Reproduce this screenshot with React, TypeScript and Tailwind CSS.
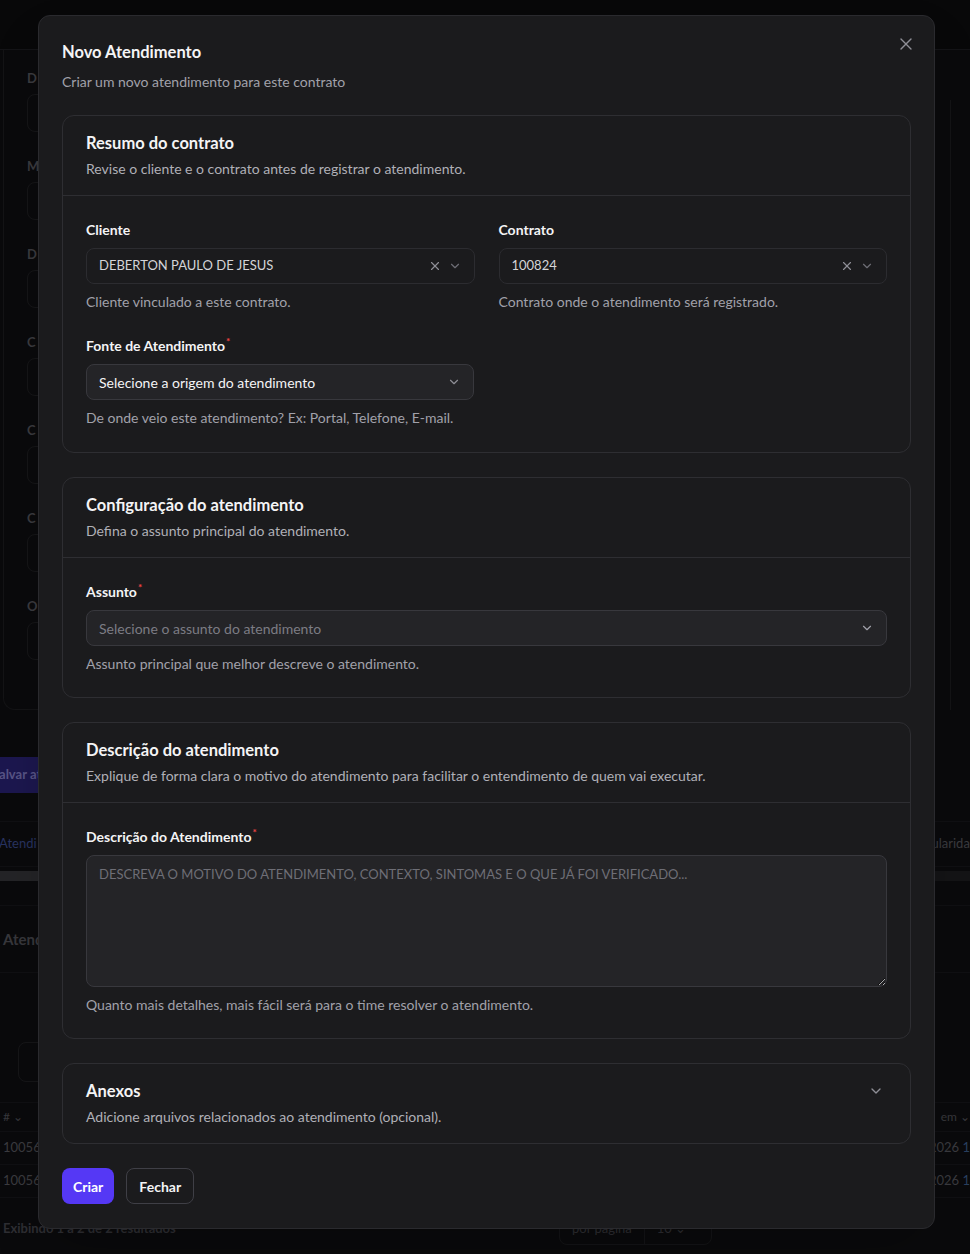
import React from "react";
import { X, ChevronDown } from "lucide-react";

const font = { fontFamily: "Lato, 'Noto Sans', sans-serif" };

function Req() {
  return <span className="ml-[1px] align-top text-[10px] leading-none text-[#ef4444]">*</span>;
}

function Label({ children, req }: { children: React.ReactNode; req?: boolean }) {
  return (
    <div className="h-5 text-[14px] font-bold leading-5 text-[#f4f4f5]">
      {children}
      {req && <Req />}
    </div>
  );
}

function Helper({ children }: { children: React.ReactNode }) {
  return <div className="mt-2 text-[14px] leading-5 text-[#a1a1aa]">{children}</div>;
}

function CardHeader({ title, sub, chevron }: { title: string; sub: string; chevron?: boolean }) {
  return (
    <div className="flex items-start justify-between px-[23px] pb-4 pt-[15px]">
      <div>
        <div className="text-[16.5px] font-bold leading-6 text-[#f4f4f5]">{title}</div>
        <div className="mt-1 text-[14px] leading-5 text-[#b0b0b7]">{sub}</div>
      </div>
      {chevron && <ChevronDown className="mr-[3px] mt-[4px] h-4 w-4 text-[#8e8e96]" strokeWidth={2} />}
    </div>
  );
}

function Background() {
  const labels = ["D", "M", "D", "C", "C", "C", "O"];
  return (
    <div className="flex w-[970px] flex-col text-[#5a5a60]">
      <div className="h-[50px] border-b border-[#1a1a1d] bg-[#0a0a0c]" />
      <div className="flex justify-between">
        <div className="ml-[3px] flex h-[660px] w-[400px] flex-col gap-[24px] rounded-bl-xl border-b border-l border-[#19191c] px-[23px] pt-[18px]">
          {labels.map((l, i) => (
            <div key={i} className="flex flex-col gap-[6px]">
              <div className="text-[13px] font-bold leading-5 text-[#4a4a50]">{l}</div>
              <div className="h-[38px] w-[300px] rounded-lg border border-[#1c1c1f]" />
            </div>
          ))}
        </div>
        <div className="mt-[50px] h-[610px] w-[20px] border-l border-[#19191c]" />
      </div>
      <div className="-ml-[20px] mt-[47px] flex h-[36px] w-[58px] items-center overflow-hidden whitespace-nowrap rounded-l-lg bg-[#231d63] pl-[12px] text-[13px] font-bold text-[#6e6aa8]">
        Salvar atendimento
      </div>
      <div className="mt-[28px] flex h-[46px] items-center justify-between overflow-hidden whitespace-nowrap border-y border-[#151518] text-[13px]">
        <span className="-ml-[1px] w-[38px] overflow-hidden text-[#33407a]">Atendimentos</span>
        <span className="-mr-[14px] text-[#4a4a50]">Regularidade</span>
      </div>
      <div className="mt-[4px] h-[10px] bg-[#1a1a1c]">
        <div className="h-full w-[300px] bg-[#2e2e31]" />
      </div>
      <div className="mt-[24px] flex h-[68px] items-center border-y border-[#151518] px-[3px] text-[15px] font-bold text-[#45454b]">
        Atendimentos
      </div>
      <div className="mt-[64px] flex h-[50px] items-center px-[18px]">
        <div className="h-[40px] w-[400px] rounded-lg border border-[#1c1c1f]" />
      </div>
      <div className="mt-[15px] flex h-[30px] items-center justify-between border-y border-[#151518] px-[3px] text-[12px] text-[#45454b]">
        <span>#  ⌄</span>
        <span className="-mr-[3px]">em ⌄</span>
      </div>
      {[0, 1].map((i) => (
        <div key={i} className="flex h-[33px] items-center justify-between border-b border-[#151518] px-[3px] text-[13px] text-[#4a4a50]">
          <span>10056</span>
          <span className="-mr-[3px]">2026 <span className="text-[#34507a]">1</span></span>
        </div>
      ))}
      <div className="mt-[15px] flex items-center px-[3px]">
        <span className="text-[13px] font-bold text-[#3a3a40]">Exibindo 1 a 2 de 2 resultados</span>
        <div className="ml-auto mr-[255px] flex h-[32px] w-[153px] items-center rounded-lg border border-[#1a1a1d] text-[13px] text-[#3a3a40]">
          <span className="px-3">por página</span>
          <span className="flex h-full items-center border-l border-[#1a1a1d] px-3">10 ⌄</span>
        </div>
      </div>
    </div>
  );
}

export default function App() {
  return (
    <div className="relative h-[1254px] w-[970px] overflow-hidden bg-[#0d0d0f]" style={font}>
      <Background />
      <div className="absolute inset-0 bg-black/20" />
      <div className="absolute left-[38px] top-[15px] flex w-[897px] flex-col rounded-xl border border-[#2a2a2e] bg-[#1b1b1d] px-[23px] pb-6 pt-6 shadow-2xl">
        <button className="absolute right-[18px] top-[18px] text-[#8e8e96]">
          <X className="h-5 w-5" strokeWidth={1.6} />
        </button>
        <div className="text-[16.5px] font-bold leading-6 text-[#f4f4f5]">Novo Atendimento</div>
        <div className="mt-2 text-[14px] leading-5 text-[#a1a1aa]">Criar um novo atendimento para este contrato</div>

        <div className="mt-[23px] flex flex-col gap-6">
          {/* Card 1 */}
          <div className="rounded-xl border border-[#2e2e32] bg-[#1b1b1d]">
            <CardHeader title="Resumo do contrato" sub="Revise o cliente e o contrato antes de registrar o atendimento." />
            <div className="border-t border-[#2e2e32] px-[23px] py-6">
              <div className="grid grid-cols-2 gap-6">
                <div>
                  <Label>Cliente</Label>
                  <div className="mt-2 flex h-9 items-center justify-between rounded-lg border border-[#2c2c30] bg-[#1b1b1d] pl-3 pr-3 text-[13px] text-[#d4d4d8]">
                    <span>DEBERTON PAULO DE JESUS</span>
                    <span className="flex items-center gap-[6px] text-[#8e8e96]">
                      <X className="h-[14px] w-[14px]" strokeWidth={2} />
                      <ChevronDown className="h-[14px] w-[14px] text-[#6e6e76]" strokeWidth={2} />
                    </span>
                  </div>
                  <Helper>Cliente vinculado a este contrato.</Helper>
                </div>
                <div>
                  <Label>Contrato</Label>
                  <div className="mt-2 flex h-9 items-center justify-between rounded-lg border border-[#2c2c30] bg-[#1b1b1d] pl-3 pr-3 text-[13px] text-[#d4d4d8]">
                    <span>100824</span>
                    <span className="flex items-center gap-[6px] text-[#8e8e96]">
                      <X className="h-[14px] w-[14px]" strokeWidth={2} />
                      <ChevronDown className="h-[14px] w-[14px] text-[#6e6e76]" strokeWidth={2} />
                    </span>
                  </div>
                  <Helper>Contrato onde o atendimento será registrado.</Helper>
                </div>
              </div>
              <div className="mt-6 w-[388px]">
                <Label req>Fonte de Atendimento</Label>
                <div className="mt-2 flex h-9 items-center justify-between rounded-lg border border-[#38383d] bg-[#242427] pl-3 pr-3 text-[14px] text-[#f4f4f5]">
                  <span>Selecione a origem do atendimento</span>
                  <ChevronDown className="h-[14px] w-[14px] text-[#8e8e96]" strokeWidth={2} />
                </div>
                <Helper>De onde veio este atendimento? Ex: Portal, Telefone, E-mail.</Helper>
              </div>
            </div>
          </div>

          {/* Card 2 */}
          <div className="rounded-xl border border-[#2e2e32] bg-[#1b1b1d]">
            <CardHeader title="Configuração do atendimento" sub="Defina o assunto principal do atendimento." />
            <div className="border-t border-[#2e2e32] px-[23px] pb-[23px] pt-6">
              <Label req>Assunto</Label>
              <div className="mt-2 flex h-9 items-center justify-between rounded-lg border border-[#38383d] bg-[#242427] pl-3 pr-3 text-[14px] text-[#7c7c84]">
                <span>Selecione o assunto do atendimento</span>
                <ChevronDown className="h-[14px] w-[14px] text-[#a1a1aa]" strokeWidth={2} />
              </div>
              <Helper>Assunto principal que melhor descreve o atendimento.</Helper>
            </div>
          </div>

          {/* Card 3 */}
          <div className="rounded-xl border border-[#2e2e32] bg-[#1b1b1d]">
            <CardHeader
              title="Descrição do atendimento"
              sub="Explique de forma clara o motivo do atendimento para facilitar o entendimento de quem vai executar."
            />
            <div className="border-t border-[#2e2e32] px-[23px] pb-[23px] pt-6">
              <Label req>Descrição do Atendimento</Label>
              <textarea
                className="mt-2 block h-[132px] w-full rounded-lg border border-[#38383d] bg-[#242427] px-3 py-[8px] text-[13px] leading-5 text-[#f4f4f5] outline-none placeholder:text-[#6e6e76]"
                style={font}
                placeholder="DESCREVA O MOTIVO DO ATENDIMENTO, CONTEXTO, SINTOMAS E O QUE JÁ FOI VERIFICADO..."
              />
              <Helper>Quanto mais detalhes, mais fácil será para o time resolver o atendimento.</Helper>
            </div>
          </div>

          {/* Card 4 */}
          <div className="rounded-xl border border-[#2e2e32] bg-[#1b1b1d]">
            <CardHeader title="Anexos" sub="Adicione arquivos relacionados ao atendimento (opcional)." chevron />
          </div>
        </div>

        <div className="mt-6 flex gap-3">
          <button className="h-9 rounded-lg bg-[#5538f5] px-[11px] text-[14px] font-bold text-white">Criar</button>
          <button className="h-9 rounded-lg border border-[#3f3f46] bg-[#1b1b1d] px-[12px] text-[14px] font-bold text-[#f4f4f5]">Fechar</button>
        </div>
      </div>
    </div>
  );
}
